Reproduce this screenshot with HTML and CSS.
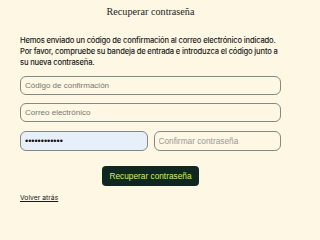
FILE: index.html
```html
<!DOCTYPE html>
<html lang="es">
<head>
<meta charset="utf-8">
<link rel="stylesheet" href="styles.css">
</head>
<body>
<main class="page">
  <h1 class="title">Recuperar contraseña</h1>
  <p class="intro">Hemos enviado un código de confirmación al correo electrónico indicado. Por favor, compruebe su bandeja de entrada e introduzca el código junto a su nueva contraseña.</p>
  <form class="form">
    <input class="field" type="text" placeholder="Código de confirmación">
    <input class="field" type="email" placeholder="Correo electrónico">
    <div class="row">
      <input class="field filled" type="password" value="contrasena12">
      <input class="field wide" type="password" placeholder="Confirmar contraseña">
    </div>
    <div class="actions">
      <button class="btn" type="button">Recuperar contraseña</button>
    </div>
  </form>
  <a class="back" href="#">Volver atrás</a>
</main>
</body>
</html>
```
FILE: styles.css
```css
html, body {
  margin: 0;
  background: #fdf7e4;
}
.page {
  box-sizing: border-box;
  width: 291px;
  min-height: 208px;
  font-family: "Inter", "Liberation Sans", Arial, sans-serif;
  color: #1c1c1c;
  padding: 0 10px 0 20px;
  display: flex;
  flex-direction: column;
}
.title {
  margin: 0;
  padding-top: 4px;
  text-align: center;
  font-family: "Liberation Serif", "Times New Roman", serif;
  font-weight: normal;
  font-size: 10.2px;
  line-height: 16px;
  color: #1e1e1e;
}
.intro {
  margin: 15px 0 0;
  font-size: 7.6px;
  font-weight: 500;
  letter-spacing: -0.17px;
  line-height: 11px;
  color: #1a1a1a;
}
.form {
  margin-top: 8px;
  display: flex;
  flex-direction: column;
  gap: 8px;
}
.field {
  box-sizing: border-box;
  width: 100%;
  height: 19px;
  margin: 0;
  padding: 0 4px;
  border: 1px solid #7f8c84;
  border-radius: 6px;
  background: #fdf7e4;
  font-family: "Liberation Sans", Arial, sans-serif;
  font-size: 8px;
  color: #111;
  outline: none;
}
.field::placeholder {
  color: #77776f;
}
.wide {
  font-size: 8.3px;
}
.wide::placeholder {
  color: #9a9a93;
}
.filled {
  background: #e6effa;
  font-size: 9px;
}
.row {
  display: grid;
  grid-template-columns: 1fr 1fr;
  gap: 6px;
  margin-top: 1px;
  height: 20px;
}
.row .field {
  height: 20px;
}
.actions {
  display: flex;
  justify-content: center;
  margin-top: 7px;
}
.btn {
  height: 20px;
  padding: 0 7px;
  border: 0;
  border-radius: 4px;
  background: #0f2720;
  color: #d4ee66;
  font-family: "Liberation Sans", Arial, sans-serif;
  font-size: 8.3px;
}
.back {
  margin-top: 7px;
  align-self: flex-start;
  font-size: 6.8px;
  color: #1a1a1a;
}
```
